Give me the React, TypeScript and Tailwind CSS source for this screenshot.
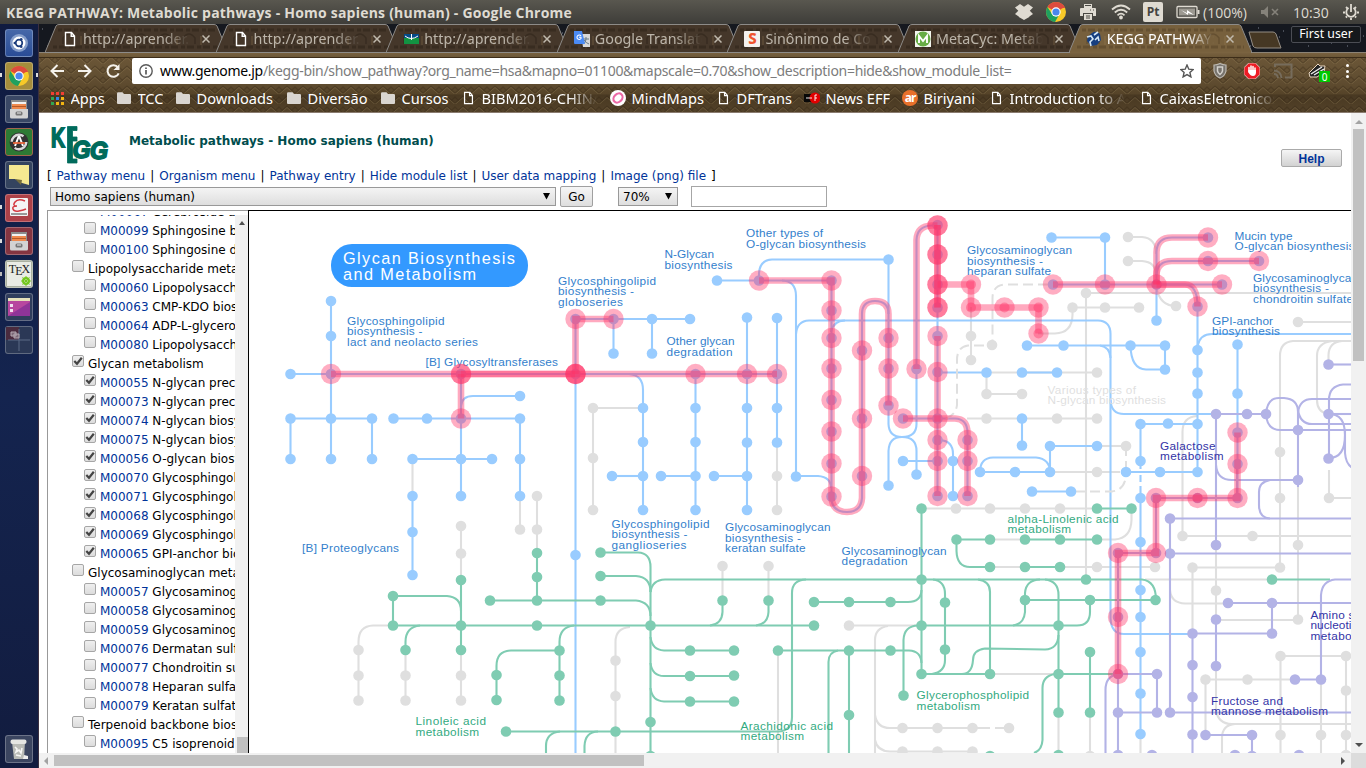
import React from 'react';

const BLUE = '#99ccff';
const GRAY = '#dfdfdf';
const GREEN = '#7fccb2';
const PURPLE = '#b3b3e6';
const PINK = '#ff3366';

type Layer = { color: string; d: string[]; dots: number[][] };

/* dots: [x, y1, y2, ...] lists the compounds of one column */
const layers: Layer[] = [
  {
    color: GRAY,
    d: [
      'M412.5 459V496', 'M520 496V529.5', 'M537 496V553', 'M593 408H643', 'M593 408V510', 'M461 526V580', 'M461 650V700',
      'M393 625.5H373Q358.5 626 358.5 642V700', 'M405.5 650V700', 'M630 627Q615.5 628 615.5 642V753', 'M777 442V510',
      'M971 307V360', 'M986.5 372.5H1097', 'M986.5 372V394H1022', 'M967 418.5H1097', 'M1097 446H1126', 'M1050 472H1120',
      'M1128 237H1142Q1156 238 1156 254', 'M1128 261H1142Q1156 262 1156 275', 'M1156.5 288Q1160 306 1176 306',
      'M1086 580V293H1351', 'M1139 307.5H1072.5V315Q1072 333 1055 333.5H1038', 'M1298 322H1351',
      'M1351 341H1293Q1280 342 1280 356V568', 'M1328.5 364V355Q1329 342 1342 341', 'M1328 414Q1317 412 1317 400V356Q1317 343 1332 341',
      'M1197 416Q1182.5 417 1182.5 432V536', 'M1182.5 536H1351', 'M1170 590Q1171 603 1185 603.5H1228', 'M1329 470V498H1351',
      'M1298 487V620H1216', 'M1192.5 633V567.5H1280', 'M1216 545V619', 'M1216 666V710Q1218 724 1232 724H1351',
      'M1222 753V738Q1222 725 1235 724', 'M1205.5 735V679.5H1295', 'M1321 679V753', 'M1280.5 753V656H1346V753',
      'M1145 579.5H1272', 'M990 674H1058', 'M1058.5 712V753', 'M1090 712V753', 'M1060 567H1155', 'M990 567H1025', 'M990 539.5H1025',
      'M1097 539.5H1115Q1131 538 1131.5 520V509', 'M921.5 508.5H1097', 'M849 625.5H921', 'M888 626Q875 628 875 640V753',
      'M875 715Q877 728 890 728H980', 'M875 740Q877 751 890 751.5H972', 'M778 650V753', 'M722.5 566V600', 'M768.5 566V600', 'M1140.5 734V753',
    ],
    dots: [
      [520, 529.5], [537, 496, 529.5], [593, 408, 458, 510], [461, 526, 553.5, 675.5, 700.5], [358.5, 650, 675.5, 700.5],
      [405.5, 675.5, 700.5], [615.5, 660.5, 696], [777, 476, 510], [971, 336, 360], [1097, 372.5, 418.5, 472, 567], [986.5, 394, 418.5],
      [1022, 394], [1057, 418.5], [1126, 446], [1128, 237, 261], [1176, 306], [1086, 293], [1072.5, 307.5], [1105, 307.5], [1139, 307.5],
      [992, 345], [1298, 322, 545, 619.5], [1280, 452, 498, 567.5], [1182.5, 536], [1252.5, 536], [1329, 498], [1192.5, 567.5],
      [1216, 590.5], [1205.5, 679.5], [1247.5, 679.5], [1321, 735], [1280.5, 656, 735], [1346, 656, 690.5, 735, 755], [1155, 567],
      [956, 508.5], [990, 508.5], [1025, 508.5], [1060, 508.5], [849, 625.5], [902.5, 728, 751.5], [937.5, 728, 751.5], [972.5, 728, 751.5],
      [1009, 728], [722.5, 566], [768.5, 566], [1090, 756],
    ],
  },
  {
    color: BLUE,
    d: [
      'M331 301V459', 'M290.5 374H777', 'M290.5 459V418.5H372V459', 'M393.5 418.5H520V496', 'M461 374V496', 'M461 409V406Q462 396 473 396H520',
      'M412.5 459H492', 'M412.5 496V575', 'M575.5 319V753', 'M575 319H690', 'M613.5 319V353.5', 'M652 319V353.5', 'M747 317.5V510',
      'M777 318V442', 'M695.5 374V510', 'M661 476H695', 'M714 476H747', 'M629 374Q643 375 643 390V510', 'M612 476H643',
      'M717 280.5H831.5V500Q833 512 847 512Q861 512 862 498V314Q862 301 875 301Q888.5 301 888.5 314',
      'M759 280.5V273Q760 260 772 259.5H888.5V424Q889 437 902 437Q916.5 437 916.5 424V240Q917 226 932 225.5H937.5V496',
      'M888.5 485V451Q889 437 902 437Q916.5 437 916.5 451V474', 'M782 280.5Q796 281 796 296V476H818Q831 477 831 488',
      'M796 334Q797 321 809 320.5H1098Q1110.5 321 1110.5 334V400Q1111 414 1124 414H1216', 'M831 332Q833 321 845 320.5',
      'M903 418.5H955Q967.5 419 967.5 433V496', 'M937 440H940Q953 441 953 454V496', 'M903 461H937', 'M937 372.5H986', 'M1022 372.5H1057',
      'M1022 418.5V445.5', 'M1050 472V446H1097', 'M980 472H1050', 'M980 472Q980 458 993 457.5H1036Q1050 459 1050 472',
      'M1126 472H1197.5', 'M1032 491.5H1071', 'M1027 345.5H1165V369.5H1146Q1131 369 1130.5 345.5', 'M1100 345.5Q1110 347 1110.5 358',
      'M1051.5 237.5H1105V284.5', 'M1053 284.5H1222', 'M1156.5 320V252Q1157 237.5 1172 237.5H1208', 'M1156.5 275Q1157 261 1172 261H1259',
      'M1156.5 284.5H1185Q1197.5 285 1197.5 306V472', 'M1197.5 346Q1200 334 1212 334H1351', 'M1237.5 344.5V498',
      'M1110.5 400V618Q1111 634 1124 634H1192', 'M1140.5 461V424H1197.5', 'M1140.5 461V469', 'M1140.5 475V482', 'M1140.5 486V734',
    ],
    dots: [
      [331, 301, 336, 374, 418.5, 459], [290.5, 374, 418.5, 459], [372, 418.5, 459], [393.5, 418.5], [427, 418.5], [461, 374, 418.5, 459, 496],
      [520, 396, 418.5, 459, 496], [412.5, 459, 496, 532, 575], [492, 459], [575.5, 319, 374, 555], [613.5, 319, 353.5], [652, 319, 353.5], [690, 319],
      [747, 317.5, 374, 408, 442.5, 476, 510], [777, 318, 374, 408, 442.5], [695.5, 374, 408, 442, 476, 510], [661, 476], [714, 476],
      [643, 408, 442, 476, 510], [612, 476], [717, 280.5], [759, 280.5], [888.5, 259.5, 338, 368.5, 405.5, 485.5], [796, 476.5],
      [831.5, 280.5, 310.5, 338, 368.5, 400, 431.5, 463.5, 496.5], [862, 350.5, 418.5, 476], [916.5, 369, 474.5],
      [937.5, 225, 254.5, 284.5, 307.5, 336, 372, 418.5, 440, 461, 496], [903, 418.5, 461], [967.5, 440, 461, 496], [953, 461, 496],
      [986.5, 372.5], [1022, 372.5, 418.5, 445.5], [1057, 372.5], [1050, 446, 472], [1097, 446], [980, 472], [1015, 472],
      [1126, 472], [1160, 472], [1197.5, 306.5, 350, 372.5, 393.5, 424, 472], [1032, 491.5], [1071, 491.5], [1027, 345.5], [1063.5, 345.5],
      [1130.5, 345.5], [1165, 345.5, 369.5], [1051.5, 237.5], [1105, 237.5, 284.5], [1053, 284.5], [1156.5, 284.5, 320.5], [1208, 237.5, 261],
      [1259, 261], [1222, 284.5], [1237.5, 344.5, 393.5, 432.5, 464], [1168, 423.5], [1140.5, 424, 461, 498, 542, 590, 617, 652, 693.5, 734],
    ],
  },
  {
    color: GREEN,
    d: [
      'M537 553V600', 'M461 580V650', 'M393 625.5V596H447Q461 597 461 611', 'M393 625.5H814', 'M420 625.5Q405.5 627 405.5 642V650',
      'M490 600.5H636Q650.5 602 650.5 616', 'M600.5 576H636Q650.5 577 650.5 592', 'M600.5 552.5H638Q650.5 553 650.5 567V753',
      'M574 625.5Q559.5 627 559.5 642V700', 'M559.5 650.5H511Q496.5 651 496.5 666V700',
      'M506 731.5H778Q792 731 792 717V593Q792 580 806 579.5', 'M546 753V746Q546 733 560 731.5', 'M584.5 753V746Q585 732 598 731.5',
      'M650.5 592Q652 580 665 579.5H1142Q1156 581 1156 600', 'M1272 579.5H1330', 'M1025 600H1155', 'M1090 600V612Q1090 625.5 1077 625.5H921',
      'M1013 625.5Q1024 624 1025 612V593Q1026 580 1040 579.5', 'M1045 579.5Q1058.5 581 1058.5 595V712',
      'M1058.5 635Q1058 649 1045 649.5L985 648.5Q973 650 973 660Q972 674 962 674', 'M978 579.5Q990 581 990 592V674H921.5V508.5',
      'M1118 674H1055Q1042.5 676 1042.5 688V740Q1042 750 1034 753', 'M1090 652V712', 'M990 539.5H956.5V551Q957 567 970 567H990',
      'M1025 567H1060', 'M1025 539.5H1097', 'M1097 508.5H1131', 'M814 602H908Q921 602 921.5 590', 'M933 579.5Q945 581 945 594V660Q945 672 932 674',
      'M903.5 695V640Q904 626 918 625.5', 'M778 650.5H909Q921 651 921.5 663', 'M849 650V753', 'M838 650.5Q828.5 652 828.5 662V753',
      'M722.5 600V612Q722 624 710 625.5', 'M768.5 600V612Q768 624 756 625.5', 'M650.5 637Q652 650 664 650.5H734', 'M650.5 663Q652 676 664 676H734',
      'M650.5 688Q652 701 664 701.5H734',
    ],
    dots: [
      [537, 553, 577, 600.5, 625.5], [461, 580, 625.5, 650], [393, 596, 625.5], [405.5, 650], [490, 600.5], [600.5, 552.5, 576, 600.5],
      [559.5, 650.5, 675.5, 700.5], [496.5, 675, 700], [506, 731.5], [615.5, 731.5], [650.5, 625.5, 722, 756], [814, 602, 625.5], [722.5, 600.5],
      [768.5, 600.5], [690, 650.5, 676, 701.5], [734, 650.5, 675.5, 701.5], [778, 650.5], [849, 602, 650.5, 715], [890.5, 602, 650.5],
      [921.5, 508.5, 579.5, 625.5, 674], [945, 602.5, 649.5], [903.5, 695.5], [956.5, 539.5], [990, 539.5, 567, 674, 756],
      [1025, 539.5, 567, 600], [1060, 539.5, 567], [1097, 508.5, 539.5], [1131.5, 508.5], [1086, 579.5], [1272, 579.5], [1155.5, 600],
      [1090, 600, 652, 712.5], [1058.5, 625.5, 674, 712.5, 755],
    ],
  },
  {
    color: PURPLE,
    d: [
      'M1216 545V414H1266Q1267 398 1279 398H1284Q1298 399 1298 412V487', 'M1216 465Q1217 480 1232 480H1298', 'M1266 414Q1267 430 1280 430H1351',
      'M1298 412Q1300 399 1312 399H1351', 'M1298 410Q1300 424 1312 424H1351', 'M1328.5 364.5H1351', 'M1351 384.5H1343Q1329 386 1329 400V458',
      'M1329 414H1351', 'M1329 414Q1345 414 1345 435Q1345 458 1329 458', 'M1345 430V453Q1346 465 1353 468',
      'M1270 480Q1259 482 1259 492V505Q1259 518 1270 518.5', 'M1351 518.5H1170V712.5H1351', 'M1170 553.5H1351', 'M1228 603H1351',
      'M1156 498H1237V464', 'M1156 498V553H1118V753', 'M1192.5 753V633.5H1272V603', 'M1216 619V666', 'M1295 679.5H1321V595Q1322 581 1335 579.5H1351',
      'M1205.5 735H1252V753', 'M1118 674H1157V712.5H1118', 'M1118 674Q1105.5 676 1105.5 690V753',
    ],
    dots: [
      [1216, 414, 545, 619.5, 666], [1247, 414], [1266, 414], [1298, 430, 480], [1328.5, 364.5, 414, 458.5], [1170, 518.5, 553.5, 712.5],
      [1228, 603], [1272, 603, 633.5], [1192.5, 633.5, 665, 697, 734.5], [1295, 679.5], [1321, 679.5], [1205.5, 735], [1252, 735, 756],
      [1157, 674, 712.5], [1118, 553, 617, 674, 712.5, 755], [1156, 498, 553], [1197.5, 498], [1237.5, 498], [1152, 755], [1235, 755], [1299, 755],
    ],
  },
];

const dashed = [
  'M1048 284.5H1006Q992.5 285 992.5 298V345', 'M984 345.5H968Q957 347 957 360V405Q956 415 945 419', 'M1126 446V472',
  'M1075 491.5H1112Q1125 490 1126 475', 'M980 728H1009',
];

const pinkLines = [
  'M331 374H777', 'M461 374H575', 'M461 374V418.5', 'M575.5 374V319H613.5',
  'M759 280.5H831.5V498Q833 512 847 512Q861 512 862 498V314Q862 301 875 301Q888.5 301 888.5 314V405.5',
  'M916.5 369V240Q917 226 932 225.5H937.5', 'M937.5 225V307.5', 'M937.5 225V307.5', 'M937.5 336V496', 'M937.5 284.5H971V307.5H1038.5V333.5',
  'M903 418.5H955Q967.5 419 967.5 433V496', 'M1053 284.5H1222', 'M1156.5 284.5V252Q1157 237.5 1172 237.5H1208',
  'M1156.5 284.5V275Q1157 261 1172 261H1259', 'M1156.5 284.5H1185Q1197.5 285 1197.5 306.5', 'M1237.5 432.5V498H1156V553H1118V674',
];

const pinkDots: number[][] = [
  [331, 374], [461, 374, 374, 418.5], [575.5, 374, 374, 374, 319], [613.5, 319], [695.5, 374], [747, 374], [777, 374], [759, 280.5],
  [831.5, 280.5, 310.5, 338, 368.5, 400, 431.5, 463.5, 496.5], [862, 350.5, 418.5, 476], [888.5, 338, 368.5, 405.5], [916.5, 369],
  [937.5, 225.5, 225.5, 254.5, 254.5, 284.5, 284.5, 307.5, 307.5, 336, 372, 418.5, 440, 461, 496], [903, 418.5], [967.5, 440, 461, 496],
  [971, 284.5, 307.5], [1004.5, 307.5], [1038.5, 307.5, 333.5], [1053, 284.5], [1105, 284.5], [1156.5, 284.5], [1222, 284.5], [1208, 237.5, 261],
  [1259, 261], [1197.5, 306.5, 498], [1237.5, 432.5, 464, 498], [1156, 498, 553], [1118, 553, 617, 674],
];

/* reaction centres drawn stronger inside the highlighted modules */
const cores: number[][] = [[971, 284.5, 307.5], [1004.5, 307.5], [1038.5, 307.5, 333.5], [1156.5, 284.5], [1197.5, 498], [1118, 674]];

type Label = [string, number, number, number, string];
const B = '#3380cc';
const G = '#33aa7f';
const P = '#3333a6';
const labels: Label[] = [
  ['Glycosphingolipid', 347, 325, 97.5, B], ['biosynthesis -', 347, 335.3, 75.5, B], ['lact and neolacto series', 347, 346, 131, B],
  ['[B] Glycosyltransferases', 425.5, 366, 132.5, B],
  ['Glycosphingolipid', 558, 285, 98, B], ['biosynthesis -', 558, 295.3, 76, B], ['globoseries', 558, 305.5, 65, B],
  ['N-Glycan', 664.5, 258, 49.5, B], ['biosynthesis', 664.5, 268.5, 68, B],
  ['Other types of', 746, 237, 77, B], ['O-glycan biosynthesis', 746, 247.7, 120, B],
  ['Other glycan', 666.5, 345, 68, B], ['degradation', 666.5, 355.5, 66, B],
  ['Glycosaminoglycan', 967, 254, 105, B], ['biosynthesis -', 967, 264.5, 76, B], ['heparan sulfate', 967, 275, 84, B],
  ['Mucin type', 1234.5, 240, 58, B], ['O-glycan biosynthesis', 1234.5, 250.3, 120, B],
  ['Glycosaminoglycan', 1253, 282, 105, B], ['biosynthesis -', 1253, 292.3, 76, B], ['chondroitin sulfate', 1253, 303, 100, B],
  ['GPI-anchor', 1212, 324.5, 61, B], ['biosynthesis', 1212, 335, 68, B],
  ['Various types of', 1047.5, 393.5, 88.5, GRAY], ['N-glycan biosynthesis', 1047.5, 404, 118.5, GRAY],
  ['Galactose', 1160, 449.7, 55.5, P], ['metabolism', 1160, 460.3, 63.5, P],
  ['[B] Proteoglycans', 302, 551.5, 97, B],
  ['Glycosphingolipid', 611.5, 527.5, 98, B], ['biosynthesis -', 611.5, 538, 76, B], ['ganglioseries', 611.5, 548.5, 75, B],
  ['Glycosaminoglycan', 725, 531, 105.5, B], ['biosynthesis -', 725, 541.5, 76, B], ['keratan sulfate', 725, 552, 80.5, B],
  ['Glycosaminoglycan', 841.5, 554.7, 105, B], ['degradation', 841.5, 565.3, 66, B],
  ['alpha-Linolenic acid', 1007.5, 522.5, 111, G], ['metabolism', 1007.5, 533, 63.5, G],
  ['Linoleic acid', 415.5, 725.3, 70.5, G], ['metabolism', 415.5, 736, 63.5, G],
  ['Arachidonic acid', 740.5, 730, 92.5, G], ['metabolism', 740.5, 740.3, 63.5, G],
  ['Biosynthesis of', 703, 760.5, 90, G],
  ['Glycerophospholipid', 916.5, 699, 112.5, G], ['metabolism', 916.5, 709.5, 63.5, G],
  ['Fructose and', 1211, 705, 72, P], ['mannose metabolism', 1211, 715.3, 117, P],
  ['Amino sugar and', 1310.5, 618.7, 92, P], ['nucleotide sugar', 1310.5, 629.3, 87, P], ['metabolism', 1310.5, 640, 63.5, P],
];

function Dots({ list, r }: { list: number[][]; r: number }) {
  return (
    <>
      {list.flatMap(([x, ...ys], i) => ys.map((y, j) => <circle key={`${i}-${j}`} cx={x} cy={y} r={r} />))}
    </>
  );
}

function PathwayMap() {
  return (
    <svg className="block h-[541px] w-[1102px]" viewBox="249 212 1102 541" fontFamily="'Liberation Sans', Arial, sans-serif">
      {layers.map((l) => (
        <g key={l.color} fill="none" stroke={l.color} strokeWidth={2.1}>
          {l.d.map((d) => <path key={d} d={d} />)}
        </g>
      ))}
      <g fill="none" stroke={GRAY} strokeWidth={2} strokeDasharray="10 5">
        {dashed.map((d) => <path key={d} d={d} />)}
      </g>
      {layers.map((l) => (
        <g key={l.color} fill={l.color}><Dots list={l.dots} r={5.3} /></g>
      ))}
      <rect x={331} y={244} width={197} height={43} rx={21} fill="#3399ff" />
      <g fill="#fff" fontSize={16.3}>
        <text x={343} y={264} textLength={172}>Glycan Biosynthesis</text>
        <text x={343} y={280} textLength={133}>and Metabolism</text>
      </g>
      <g fontSize={11.8}>
        {labels.map(([t, x, y, w, c]) => <text key={`${x}-${y}`} x={x} y={y} textLength={w} fill={c}>{t}</text>)}
      </g>
      <g fill="none" stroke={PINK} strokeWidth={6.6}>
        {pinkLines.map((d, i) => <path key={i} d={d} opacity={0.42} />)}
      </g>
      <g fill={PINK} fillOpacity={0.4}><Dots list={pinkDots} r={10.2} /></g>
      <g fill={PINK} fillOpacity={0.4}><Dots list={cores} r={5} /></g>
    </svg>
  );
}

type Row = { id?: string; text: string; on?: boolean };
const rows: Row[] = [
  { id: 'M00067', text: 'Cerebroside and sulfatide' },
  { id: 'M00099', text: 'Sphingosine biosynthesis' },
  { id: 'M00100', text: 'Sphingosine degradation' },
  { text: 'Lipopolysaccharide metabolism' },
  { id: 'M00060', text: 'Lipopolysaccharide' },
  { id: 'M00063', text: 'CMP-KDO biosynthesis' },
  { id: 'M00064', text: 'ADP-L-glycero-D-manno' },
  { id: 'M00080', text: 'Lipopolysaccharide' },
  { text: 'Glycan metabolism', on: true },
  { id: 'M00055', text: 'N-glycan precursor', on: true },
  { id: 'M00073', text: 'N-glycan precursor', on: true },
  { id: 'M00074', text: 'N-glycan biosynthesis', on: true },
  { id: 'M00075', text: 'N-glycan biosynthesis', on: true },
  { id: 'M00056', text: 'O-glycan biosynthesis', on: true },
  { id: 'M00070', text: 'Glycosphingolipid', on: true },
  { id: 'M00071', text: 'Glycosphingolipid', on: true },
  { id: 'M00068', text: 'Glycosphingolipid', on: true },
  { id: 'M00069', text: 'Glycosphingolipid', on: true },
  { id: 'M00065', text: 'GPI-anchor biosynthesis', on: true },
  { text: 'Glycosaminoglycan metabolism' },
  { id: 'M00057', text: 'Glycosaminoglycan' },
  { id: 'M00058', text: 'Glycosaminoglycan' },
  { id: 'M00059', text: 'Glycosaminoglycan' },
  { id: 'M00076', text: 'Dermatan sulfate' },
  { id: 'M00077', text: 'Chondroitin sulfate' },
  { id: 'M00078', text: 'Heparan sulfate' },
  { id: 'M00079', text: 'Keratan sulfate' },
  { text: 'Terpenoid backbone biosynthesis' },
  { id: 'M00095', text: 'C5 isoprenoid' },
];

function Check({ on }: { on?: boolean }) {
  return (
    <span className="mb-[5px] flex h-3 w-3 shrink-0 items-center justify-center rounded-[2px] border border-[#a6a6a6] bg-linear-to-b from-[#efefef] to-[#dcdcdc]">
      {on && (
        <svg viewBox="0 0 10 10" className="h-[10px] w-[10px]"><path d="M1.3 5 4 7.8 8.8 1.8" fill="none" stroke="#444" strokeWidth="2.2" /></svg>
      )}
    </span>
  );
}

function ModuleList() {
  return (
    <div className="flex h-[543px] w-[201px] shrink-0 border-t border-l border-[#999] bg-white pt-1">
      <div className="h-[538px] w-[187px] overflow-hidden">
        <div className="-mt-[13px]">
          {rows.map((r, i) => (
            <div key={i} className={`flex h-[19px] items-center whitespace-nowrap text-[12px] text-black ${r.id ? 'pl-9' : 'pl-6'}`}>
              <Check on={r.on} />
              <span className="ml-1 pt-px">{r.id && <span className="text-[#003399]">{r.id} </span>}{r.text}</span>
            </div>
          ))}
        </div>
      </div>
      <div className="flex h-[538px] w-[13px] flex-col items-center justify-between bg-[#f1f1f1]">
        <span className="mt-[6px] h-0 w-0 border-x-[3.5px] border-b-4 border-x-transparent border-b-[#505050]" />
        <span className="h-4 w-[11px] self-end bg-[#c1c1c1]" />
      </div>
    </div>
  );
}

function ChromeIcon({ className }: { className: string }) {
  return (
    <svg viewBox="0 0 20 20" className={className}>
      <circle cx="10" cy="10" r="10" fill="#f7c928" />
      <path d="M1.4 5A10 10 0 0 1 18.7 5L10 10z" fill="#dd4b3e" />
      <path d="M1.4 5A10 10 0 0 0 9 20L13.5 12 6 12z" fill="#1fa05f" />
      <path d="M10 5H18.7L19 6H10z" fill="#dd4b3e" />
      <circle cx="10" cy="10" r="4.7" fill="#fff" />
      <circle cx="10" cy="10" r="3.6" fill="#4a87ee" />
    </svg>
  );
}

function Page({ className }: { className: string }) {
  return <svg viewBox="0 0 12 16" className={className}><path d="M1.5 1.5H7.5L10.5 5V14.5H1.5zM7.2 1.5V5.3H10.5" fill="none" stroke="#fff" strokeWidth="1.4" /></svg>;
}

function TopPanel() {
  return (
    <div className="flex h-6 shrink-0 items-center bg-linear-to-b from-[#59574f] to-[#3e3d39] pr-[7px] pl-[6px] font-['Open_Sans','Noto_Sans',sans-serif] text-[#dfdbd2]">
      <span className="text-[14px] font-bold tracking-[0.22px]">KEGG PATHWAY: Metabolic pathways - Homo sapiens (human) - Google Chrome</span>
      <div className="ml-auto flex h-6 items-center">
        <svg viewBox="0 0 18 16" className="mr-[13px] h-4 w-[18px]" fill="#dfdbd2"><path d="M5 0 9 2.8 13 0 18 3.6 14.8 6.8 18 10 14.3 12.5V13L9 16 3.8 13V12.5L0 10 3.3 6.8 0 3.6z" /></svg>
        <ChromeIcon className="mr-[14px] h-5 w-5" />
        <svg viewBox="0 0 16 16" className="mr-[15px] h-4 w-4"><path d="M4 0H12V4H15Q16 4 16 5V12H13V9H3V12H0V5Q0 4 1 4H4z M4 10H12V16H4z" fill="#dfdbd2" /><path d="M5 1.5H11M6 12H10M6 14H10M10 6H11M13 6H14" stroke="#4a4943" /></svg>
        <svg viewBox="0 0 20 16" className="mr-3 h-4 w-5" fill="none" stroke="#dfdbd2" strokeWidth="1.8"><path d="M1 5.5Q10-2.5 19 5.5M3.8 8.5Q10 3 16.2 8.5M6.5 11.3Q10 8 13.5 11.3" /><circle cx="10" cy="13.5" r="1" fill="#dfdbd2" /></svg>
        <span className="mr-[13px] flex h-5 w-5 items-center justify-center rounded-[2px] bg-[#dfdbd2] text-[12px] font-bold text-[#45443f]">Pt</span>
        <svg viewBox="0 0 24 14" className="mr-[3px] h-[14px] w-6"><rect x="1" y="1.5" width="20" height="11" rx="1" fill="none" stroke="#dfdbd2" strokeWidth="1.3" /><rect x="3" y="3.5" width="16" height="7" fill="#9c9991" /><path d="M22.5 5V9" stroke="#dfdbd2" strokeWidth="2" /><path d="M5 5 11 8 11 5 18 10 12 8 12 10z" fill="#fff" /></svg>
        <span className="w-[46px] text-[14px]">(100%)</span>
        <svg viewBox="0 0 18 12" className="mr-[14px] ml-[12px] h-3 w-[18px]"><path d="M0 4H3L7 0V12L3 8H0z" fill="#85827a" /><path d="M11 3 17 9M17 3 11 9" stroke="#85827a" strokeWidth="1.6" /></svg>
        <span className="mr-3 w-[38px] text-[14px]">10:30</span>
        <svg viewBox="0 0 16 16" className="h-4 w-4" fill="none" stroke="#dfdbd2"><path d="M5.6 4.1A4.7 4.7 0 1 0 10.4 4.1" strokeWidth="1.8" /><path d="M8 0V8" strokeWidth="1.8" /><path d="M3 3 4.5 4.5M13 3 11.5 4.5M0 8.5H2M14 8.5H16M2.8 13.5 4 12.3M13.2 13.5 12 12.3M8 14V16" strokeWidth="1.8" /></svg>
      </div>
    </div>
  );
}

function LauncherTile({ bg, children }: { bg: string; children: React.ReactNode }) {
  return <div className={`flex h-7 w-7 shrink-0 items-center justify-center rounded-[3px] border border-white/25 ${bg}`}>{children}</div>;
}

function Cabinet() {
  return (
    <svg viewBox="0 0 20 20" className="h-5 w-5">
      <path d="M2 1H18V10H2z" fill="#8c8c8c" /><path d="M3 3H17V6H3z" fill="#f2f2f2" /><path d="M3 5H17V10H3z" fill="#ef8a4e" /><path d="M3 7.5H17" stroke="#b75a28" />
      <path d="M1 10H19V18Q19 19.5 17.5 19.5H2.5Q1 19.5 1 18z" fill="#d3d3d3" /><rect x="6.5" y="12.5" width="7" height="4" rx="1.5" fill="#777" /><path d="M8 14H12" stroke="#eee" />
    </svg>
  );
}

function Launcher() {
  return (
    <div className="relative flex w-[39px] shrink-0 flex-col items-center gap-[5px] border-r border-[#3b3040] bg-linear-to-b from-[#101b40] via-[#14244f] to-[#121c3f] pt-[5px] pb-[5px]">
      <LauncherTile bg="bg-linear-to-b from-[#4668a8] to-[#2a4c96]">
        <svg viewBox="0 0 20 20" className="h-5 w-5"><circle cx="10" cy="10" r="9" fill="#a6bbdc" opacity=".7" /><circle cx="10" cy="10" r="6.5" fill="#fff" /><circle cx="10" cy="10" r="3.3" fill="none" stroke="#1c3d7c" strokeWidth="1.7" /><circle cx="5.8" cy="10" r="1.3" fill="#1c3d7c" /><circle cx="12.2" cy="6.3" r="1.3" fill="#1c3d7c" /><circle cx="12.2" cy="13.7" r="1.3" fill="#1c3d7c" /></svg>
      </LauncherTile>
      <LauncherTile bg="bg-[#a58d3c]"><ChromeIcon className="h-5 w-5" /></LauncherTile>
      <LauncherTile bg="bg-[#3a4865]"><Cabinet /></LauncherTile>
      <LauncherTile bg="bg-[#2d7a34] !border-[#a2664c]">
        <svg viewBox="0 0 20 20" className="h-5 w-5"><circle cx="10" cy="10" r="9.5" fill="#333" /><circle cx="10" cy="10" r="7.3" fill="none" stroke="#d8d8d8" strokeWidth="2.4" strokeDasharray="16 7" /><path d="M6 14 9.5 5H10.5L14 14" fill="none" stroke="#fff" strokeWidth="2" /><path d="M4 11H16" stroke="#e8663c" strokeWidth="1.8" /></svg>
      </LauncherTile>
      <LauncherTile bg="bg-[#34435f]">
        <svg viewBox="0 0 22 22" className="h-[22px] w-[22px]"><path d="M1 1H21V21L14 19 7 15H1z" fill="#f5e891" /><path d="M7 15 14 16 13 21z" fill="#756d3d" /></svg>
      </LauncherTile>
      <LauncherTile bg="bg-[#ad4148]">
        <svg viewBox="0 0 20 20" className="h-5 w-5"><rect x="1" width="18" height="18" rx="1" fill="#f4f4f4" /><path d="M16 3Q9 0 6 4T8 8Q3 8 4 11T10 13 17 11" fill="none" stroke="#d43b42" strokeWidth="1.5" /><path d="M2 16H18" stroke="#999" strokeWidth="2" /></svg>
      </LauncherTile>
      <LauncherTile bg="bg-[#853541]"><Cabinet /></LauncherTile>
      <LauncherTile bg="bg-[#aab0a0]">
        <div className="relative h-6 w-6 bg-[#e9ebe4] text-center font-['Liberation_Serif',serif] text-[12px] leading-[14px] tracking-[-1px] text-[#222]">T<span className="relative top-[2px]">E</span>X
          <svg viewBox="0 0 10 10" className="absolute right-0 bottom-0 h-[10px] w-[10px]"><circle cx="5" cy="5" r="3" fill="none" stroke="#74c71f" strokeWidth="2" /><path d="M5 0V10M0 5H10M1.5 1.5 8.5 8.5M8.5 1.5 1.5 8.5" stroke="#74c71f" strokeWidth="1" /></svg>
        </div>
      </LauncherTile>
      <LauncherTile bg="bg-[#303d5c]">
        <svg viewBox="0 0 22 18" className="h-[18px] w-[22px]"><rect width="22" height="18" fill="#b7479f" /><path d="M0 18 22 4V18z" fill="#8f3498" /><path d="M0 0H22V3H0z" fill="#e6e0ba" /><path d="M2 6H5V9H2zM2 11H5V14H2z" fill="#f0dff0" /></svg>
      </LauncherTile>
      <LauncherTile bg="bg-[#2b3856]">
        <svg viewBox="0 0 26 26" className="h-[26px] w-[26px]"><rect width="13" height="13" fill="#4a2b3e" /><path d="M13 2V24M2 13H24" stroke="#5d6a86" /><path d="M5 5H10V9H5zM8 7H13V11H8z" fill="#7c6877" stroke="#b5aab3" /></svg>
      </LauncherTile>
      <div className="mt-auto">
        <LauncherTile bg="bg-[#3b4560]">
          <svg viewBox="0 0 20 22" className="h-[22px] w-5"><path d="M3 4H16L15 21H5z" fill="#b9bbb6" /><rect x="1.5" y="1.5" width="16" height="4.5" rx="2" fill="#e5e6e2" /><path d="M6 9 8 11 7 14 10 12 12 15 13 10M7 17 12 18" stroke="#f7f7f5" strokeWidth="1.6" fill="none" /><path d="M15 17 19 18V21H14z" fill="#eee" /></svg>
        </LauncherTile>
      </div>
      <span className="absolute top-[49px] left-0 h-1 w-[2px] bg-[#ddd]" />
      <span className="absolute top-[49px] right-0 h-1 w-[2px] bg-[#ddd]" />
      <span className="absolute top-[181px] left-0 h-1 w-[2px] bg-[#ddd]" />
      <span className="absolute top-[215px] left-0 h-1 w-[2px] bg-[#ddd]" />
      <span className="absolute top-[248px] left-0 h-1 w-[2px] bg-[#bbb]" />
    </div>
  );
}

function Carving() {
  return (
    <svg className="absolute inset-0 h-[89px] w-[1327px]" aria-hidden="true">
      <defs>
        <pattern id="lattice" width="16" height="10" patternUnits="userSpaceOnUse">
          <path d="M0 9 8 2 16 9M-4 7 0 3 4 7M12 7 16 3 20 7" fill="none" stroke="#2e2211" strokeWidth="1.3" opacity=".3" />
          <path d="M0 10.5 8 3.5 16 10.5" fill="none" stroke="#a08a62" strokeWidth="1" opacity=".28" />
        </pattern>
        <pattern id="stars" width="97" height="28" patternUnits="userSpaceOnUse">
          <rect width="97" height="28" fill="#15181f" />
          <path d="M3 5h1M12 14h1M22 4h1M31 19h1M38 9h1M47 22h1M55 4h1M63 12h1M71 21h1M80 7h1M88 16h1M93 3h1M8 22h1M27 11h1M52 15h1M76 13h1" stroke="#7d8390" strokeWidth="1" />
        </pattern>
        <linearGradient id="wood" x1="0" y1="0" x2="0" y2="1">
          <stop offset="0" stopColor="#7a6340" /><stop offset=".09" stopColor="#6b5637" /><stop offset=".5" stopColor="#5f4c30" /><stop offset=".68" stopColor="#564429" /><stop offset=".71" stopColor="#493922" /><stop offset="1" stopColor="#534229" />
        </linearGradient>
      </defs>
      <rect width="1327" height="28" fill="url(#stars)" />
      <rect y="28" width="1327" height="61" fill="url(#wood)" />
      <rect y="34" width="1327" height="55" fill="url(#lattice)" />
      <path d="M0 28.5H1327" stroke="#8c8376" />
      <path d="M0 33.5H1327" stroke="#3c2c18" />
      <path d="M0 88.5H1327" stroke="#8a7c70" />
    </svg>
  );
}

function TabShape({ active }: { active?: boolean }) {
  return (
    <svg viewBox="0 0 183 29" className="absolute inset-0 h-[29px] w-[183px]" aria-hidden="true">
      <path d="M0 28.5 11 2Q12 .5 14 .5H169Q171 .5 172 2L183 28.5z" fill={active ? '#77603d' : '#45372a'} stroke="#8d8b88" />
      <g fill="none" stroke={active ? '#46351d' : '#211910'} opacity=".35">
        <path d="M13 6H170M8 23H175" strokeWidth="3" strokeDasharray="4 2 7 3" />
        <path d="M18 20V14q6-8 12 0v6M42 20V14q6-8 12 0v6M66 20V14q6-8 12 0v6M90 20V14q6-8 12 0v6M114 20V14q6-8 12 0v6M138 20V14q6-8 12 0v6" strokeWidth="1.5" />
      </g>
      <path d="M36 21V12M60 21V12M84 21V12M108 21V12M132 21V12M156 21V12" stroke="#a08458" strokeWidth="2" opacity=".2" />
      {active && <path d="M1 28.5H182" stroke="#7a6340" strokeWidth="2" />}
    </svg>
  );
}

const tabs = [
  { text: 'http://aprender.un', icon: <Page className="h-4 w-3" /> },
  { text: 'http://aprender.un', icon: <Page className="h-4 w-3" /> },
  { text: 'http://aprender.un', icon: <svg viewBox="0 0 15 10" className="h-[10px] w-[15px]"><path d="M0 0H15V5H0z" fill="#054a87" /><path d="M0 4H15V10H0z" fill="#129342" /><path d="M1 2Q7 7 14 2M7.5 0V6" fill="none" stroke="#fff" /></svg> },
  { text: 'Google Translate', icon: <svg viewBox="0 0 16 16" className="h-4 w-4"><path d="M7 3H16V16H9z" fill="#d9d9d9" /><path d="M9 8H15M12 6V8Q12 12 9 13M10 9Q12 12 15 13" stroke="#667b88" fill="none" /><path d="M0 0H8L11 13H1Q0 13 0 12z" fill="#4b8bf5" /><path d="M7 5A2.2 2.2 0 1 0 7 7.5V6.3H5" fill="none" stroke="#fff" strokeWidth="1.1" /></svg> },
  { text: 'Sinônimo de Cor', icon: <span className="flex h-4 w-4 items-center justify-center rounded-[1px] bg-[#f4f1ee] text-[15px] leading-none font-extrabold text-[#f0532d]">S</span> },
  { text: 'MetaCyc: Metabo', icon: <svg viewBox="0 0 16 16" className="h-4 w-4"><rect width="16" height="16" fill="#f3f6ef" /><circle cx="8" cy="8" r="7.5" fill="#67ad45" /><path d="M4 12V5L8 10 12 5V12" fill="none" stroke="#fff" strokeWidth="1.9" /></svg> },
  { text: 'KEGG PATHWAY: ', active: true, icon: <svg viewBox="0 0 16 16" className="h-4 w-4"><path d="M6 2Q10-1 14 3L15 9 11 14 5 15 1 10 2 6z" fill="#173f80" /><path d="M1 6 5 5 7 8 4 11 5 15M8 4 12 1M9 9 12 6 13 10" stroke="#d5e7f4" strokeWidth="1.6" fill="none" /></svg> },
];

function TabStrip() {
  return (
    <div className="relative flex h-[29px] pl-[6px]">
      {tabs.map((t, i) => (
        <div key={i} className="relative mr-[-12.4px] flex h-[29px] w-[183px] shrink-0 items-center pl-[17px]">
          <TabShape active={t.active} />
          <span className="relative flex w-4 justify-center">{t.icon}</span>
          <span className={`relative ml-[5px] w-[107px] overflow-hidden text-[14.3px] whitespace-nowrap [mask-image:linear-gradient(90deg,#000_75%,transparent)] ${t.active ? 'text-white' : 'text-[#bcb5aa]'}`}>{t.text}</span>
          <svg viewBox="0 0 8 8" className="relative ml-[12px] h-2 w-2"><path d="M.5.5 7.5 7.5M7.5.5.5 7.5" stroke="#c0b9ad" strokeWidth="1.5" /></svg>
        </div>
      ))}
      <svg viewBox="0 0 36 18" className="relative mt-[7px] ml-[9px] h-[18px] w-9"><path d="M1 1H25Q27 1 28 3L33 17H9Q6 17 5 15z" fill="#463824" stroke="#948d84" /></svg>
      <span className="absolute top-[2px] right-[5px] flex h-[17px] w-[70px] items-center justify-center rounded-[2px] border border-[#4b4d54] bg-[#15181c] text-[12.3px] text-white">First user</span>
    </div>
  );
}

function Toolbar() {
  return (
    <div className="relative mt-[5px] flex h-[26px] items-center pl-[10px]">
      <svg viewBox="0 0 76 16" className="h-4 w-[76px]" fill="none" stroke="#f5f2ec" strokeWidth="2"><path d="M15 8H3M8.5 2 2.5 8 8.5 14M29 8H41M35.5 2 41.5 8 35.5 14" /><path d="M69 4.5A5.8 5.8 0 1 0 69.7 10.3" /><path d="M70.5 1V7H64.5z" fill="#f5f2ec" stroke="none" /></svg>
      <div className="ml-[7px] flex h-[26px] w-[1069px] items-center rounded-[2px] bg-white px-[7px]">
        <svg viewBox="0 0 14 14" className="h-[14px] w-[14px]" fill="none" stroke="#5a5a5a" strokeWidth="1.4"><circle cx="7" cy="7" r="6.2" /><path d="M7 6V10.5M7 3.4V4.9" strokeWidth="1.7" /></svg>
        <span className="ml-[7px] pb-px text-[14px] tracking-[-0.3px] whitespace-nowrap text-[#7c7c7c]"><span className="text-black">www.genome.jp</span>/kegg-bin/show_pathway?org_name=hsa&amp;mapno=01100&amp;mapscale=0.70&amp;show_description=hide&amp;show_module_list=</span>
        <svg viewBox="0 0 14 14" className="ml-auto h-[14px] w-[14px]"><path d="M7 1 8.8 5.2 13.2 5.6 9.9 8.5 10.9 12.9 7 10.6 3.1 12.9 4.1 8.5.8 5.6 5.2 5.2z" fill="none" stroke="#555" strokeWidth="1.4" /></svg>
      </div>
      <svg viewBox="0 0 14 16" className="ml-[12px] h-4 w-[14px]"><path d="M1 2Q4 2 7 .5 10 2 13 2V8Q12 13 7 15 2 13 1 8z" fill="#77736d" stroke="#bcb8b2" strokeWidth="1.2" /><path d="M4.5 4H9.5V8Q9 10 7 11.5 5 10 4.5 8z" fill="none" stroke="#d4d1cc" strokeWidth="1.5" /></svg>
      <svg viewBox="0 0 16 16" className="ml-[17px] h-4 w-4"><path d="M4.7 0H11.3L16 4.7V11.3L11.3 16H4.7L0 11.3V4.7z" fill="#ed1c24" stroke="#eee" strokeWidth=".7" /><path d="M5 9V4.5M7 8V3M9 8V3.5M11 9V5" stroke="#fff" strokeWidth="1.5" strokeLinecap="round" /><path d="M4.3 7H12V9Q12 13 9 13 6 13 4.3 9z" fill="#fff" /></svg>
      <svg viewBox="0 0 20 16" className="ml-[13px] h-4 w-5" fill="none" stroke="#766c5c" strokeWidth="2"><path d="M2 4V1.5H18.5V14.5H12M1 7.5Q8 8 8.5 15M1 11Q4.5 11 5 15" /></svg>
      <span className="relative ml-[15px] h-4 w-[22px]">
        <svg viewBox="0 0 20 16" className="h-4 w-5"><path d="M1 10 6 5 10 1 12 3 17 3 16 9 9 14H2z" fill="#222" stroke="#e8d5bf" /><path d="M3 11 14 4M6 12 16 6" stroke="#eee" strokeWidth="1.4" /></svg>
        <span className="absolute top-[8px] left-[11px] flex h-[11px] w-[11px] items-center justify-center bg-[#00c800] text-[10px] leading-none text-white">0</span>
      </span>
      <span className="ml-4 flex flex-col gap-[2.5px]"><i className="h-[3px] w-[3px] rounded-full bg-white" /><i className="h-[3px] w-[3px] rounded-full bg-white" /><i className="h-[3px] w-[3px] rounded-full bg-white" /></span>
    </div>
  );
}

const folder = <svg viewBox="0 0 14 12" className="h-3 w-[14px]"><path d="M0 1.5Q0 .3 1.2.3H5.5L7 2H12.8Q14 2 14 3V11Q14 12 13 12H1Q0 12 0 11z" fill="#d9d5d0" /></svg>;
const bookmarks = [
  { w: 'w-[67px]', icon: <span className="grid grid-cols-3 gap-[2px]">{['bg-[#f23f34]', 'bg-[#f23f34]', 'bg-[#f23f34]', 'bg-[#31a651]', 'bg-[#2f86ea]', 'bg-[#f3b512]', 'bg-[#31a651]', 'bg-[#f3b512]', 'bg-[#f3b512]'].map((c, i) => <i key={i} className={`h-[3px] w-[3px] ${c}`} />)}</span>, text: 'Apps' },
  { w: 'w-[59px]', icon: folder, text: 'TCC' },
  { w: 'w-[111px]', icon: folder, text: 'Downloads' },
  { w: 'w-[94px]', icon: folder, text: 'Diversão' },
  { w: 'w-[80px]', icon: folder, text: 'Cursos' },
  { w: 'w-[150px]', icon: <Page className="h-[14px] w-[11px]" />, text: 'BIBM2016-CHINA', fade: true },
  { w: 'w-[105px]', icon: <svg viewBox="0 0 16 16" className="h-4 w-4"><circle cx="8" cy="8" r="8" fill="#fff" /><ellipse cx="8" cy="8" rx="5" ry="4" transform="rotate(-45 8 8)" fill="none" stroke="#ec6aa6" strokeWidth="2.2" /></svg>, text: 'MindMaps' },
  { w: 'w-[89px]', icon: <Page className="h-[14px] w-[11px]" />, text: 'DFTrans' },
  { w: 'w-[98px]', icon: <svg viewBox="0 0 16 12" className="h-3 w-4"><path d="M0 2H9V10H0z" fill="#080808" /><circle cx="11" cy="6" r="5.5" fill="#e10000" /><path d="M2 6H8M11 9V3H13M11 6H13" stroke="#fff" fill="none" strokeWidth=".9" /></svg>, text: 'News EFF' },
  { w: 'w-[86px]', icon: <span className="flex h-4 w-4 items-center justify-center rounded-full bg-[#e8702a] text-[12px] leading-none font-bold tracking-[-1px] text-white">ar</span>, text: 'Biriyani' },
  { w: 'w-[150px]', icon: <Page className="h-[14px] w-[11px]" />, text: 'Introduction to Al', fade: true },
  { w: 'w-[150px]', icon: <Page className="h-[14px] w-[11px]" />, text: 'CaixasEletronicos', fade: true },
];

function Bookmarks() {
  return (
    <div className="relative flex h-[29px] items-center pl-[10px] text-[14.6px] text-white">
      {bookmarks.map((b) => (
        <div key={b.text} className={`flex shrink-0 items-center ${b.w}`}>
          <span className="flex w-4 justify-center">{b.icon}</span>
          <span className={`ml-[5.5px] overflow-hidden whitespace-nowrap ${b.fade ? 'w-[115px] [mask-image:linear-gradient(90deg,#000_75%,transparent)]' : ''}`}>{b.text}</span>
        </div>
      ))}
    </div>
  );
}

function KeggHeader() {
  return (
    <div className="flex h-[53px] items-start">
      <svg viewBox="0 0 60 40" className="mt-[12px] ml-[11px] h-10 w-[60px] shrink-0" fontFamily="'Liberation Sans', Arial, sans-serif" fontWeight="900" fill="#006b5c" stroke="#006b5c" strokeWidth="1.8">
        <text x="1" y="21.5" fontSize="28" textLength="14" lengthAdjust="spacingAndGlyphs">K</text>
        <path d="M17.5 1.5H27V5.5H22.5V12H27V16H22.5V34H27V38H17.5z" strokeWidth=".8" />
        <text x="22.5" y="32.5" fontSize="24" fontStyle="italic" textLength="18" lengthAdjust="spacingAndGlyphs">G</text>
        <text x="40" y="34" fontSize="24" fontStyle="italic" textLength="18" lengthAdjust="spacingAndGlyphs">G</text>
      </svg>
      <span className="mt-[20px] ml-[19px] text-[12px] leading-4 font-bold text-[#004d4d]">Metabolic pathways - Homo sapiens (human)</span>
      <span className="mt-[36px] mr-[9px] ml-auto flex h-[18px] w-[61px] items-center justify-center rounded-[2px] border border-[#aaa] bg-linear-to-b from-[#f5f5f5] to-[#d2d2d2] pt-[2px] font-['Liberation_Sans',sans-serif] text-[12px] font-bold text-[#003399]">Help</span>
    </div>
  );
}

const links = ['Pathway menu', 'Organism menu', 'Pathway entry', 'Hide module list', 'User data mapping', 'Image (png) file'];

function SelectBox({ text, w }: { text: string; w: string }) {
  return (
    <span className={`flex h-[19px] items-center justify-between border border-[#999] bg-linear-to-b from-[#f4f4f4] to-[#dedede] pr-[5px] pl-1 ${w}`}>
      {text}<svg viewBox="0 0 7 7" className="h-[7px] w-[7px]"><path d="M0 0H7L3.5 6.5z" fill="#000" /></svg>
    </span>
  );
}

export default function App() {
  return (
    <div className="flex h-[768px] w-[1366px] flex-col overflow-hidden bg-white">
      <TopPanel />
      <div className="flex h-[744px]">
        <Launcher />
        <div className="flex w-[1327px] flex-col">
          <div className="relative h-[89px] shrink-0 overflow-hidden font-['Noto_Sans',sans-serif]">
            <Carving />
            <TabStrip />
            <Toolbar />
            <Bookmarks />
          </div>
          <div className="flex h-[640px]">
            <div className="w-[1312px] overflow-hidden bg-white font-['DejaVu_Sans',Verdana,sans-serif] text-[12px] text-black">
              <KeggHeader />
              <div className="flex h-[19px] items-center pl-2 whitespace-pre">
                <span className="[word-spacing:1px]">[ </span>
                {links.map((l, i) => <React.Fragment key={l}>{i > 0 && <span className="[word-spacing:1.2px]"> | </span>}<span className="text-[#003399]">{l}</span></React.Fragment>)}
                <span className="[word-spacing:1px]"> ]</span>
              </div>
              <div className="flex h-[25px] items-center pb-[2px] pl-[11px]">
                <SelectBox text="Homo sapiens (human)" w="w-[506px]" />
                <span className="ml-1 flex h-[21px] w-[33px] items-center justify-center rounded-[2px] border border-[#a0a0a0] bg-linear-to-b from-[#f6f6f6] to-[#dedede]">Go</span>
                <span className="ml-[25px]"><SelectBox text="70%" w="w-[60px]" /></span>
                <span className="ml-[13px] h-[21px] w-[136px] border border-[#a6a6a6] bg-white" />
              </div>
              <div className="flex h-[543px] pl-2">
                <ModuleList />
                <div className="h-[543px] w-[1103px] shrink-0 border-t border-l border-black pt-px"><PathwayMap /></div>
              </div>
            </div>
            <div className="flex w-[15px] flex-col items-center bg-[#f1f1f1]">
              <span className="mt-[7px] h-0 w-0 border-x-4 border-b-4 border-x-transparent border-b-[#a3a3a3]" />
              <span className="mt-[5px] h-[232px] w-[11px] bg-[#c1c1c1]" />
              <span className="mt-auto mb-[6px] h-0 w-0 border-x-4 border-t-4 border-x-transparent border-t-[#505050]" />
            </div>
          </div>
          <div className="flex h-[15px] items-center bg-[#f1f1f1]">
            <span className="ml-[5px] h-0 w-0 border-y-4 border-r-4 border-y-transparent border-r-[#a3a3a3]" />
            <span className="ml-[6px] h-[11px] w-[590px] bg-[#c1c1c1]" />
            <span className="mr-[6px] ml-auto h-0 w-0 border-y-4 border-l-4 border-y-transparent border-l-[#505050]" />
            <span className="h-[15px] w-[15px] bg-[#dcdcdc]" />
          </div>
        </div>
      </div>
    </div>
  );
}
